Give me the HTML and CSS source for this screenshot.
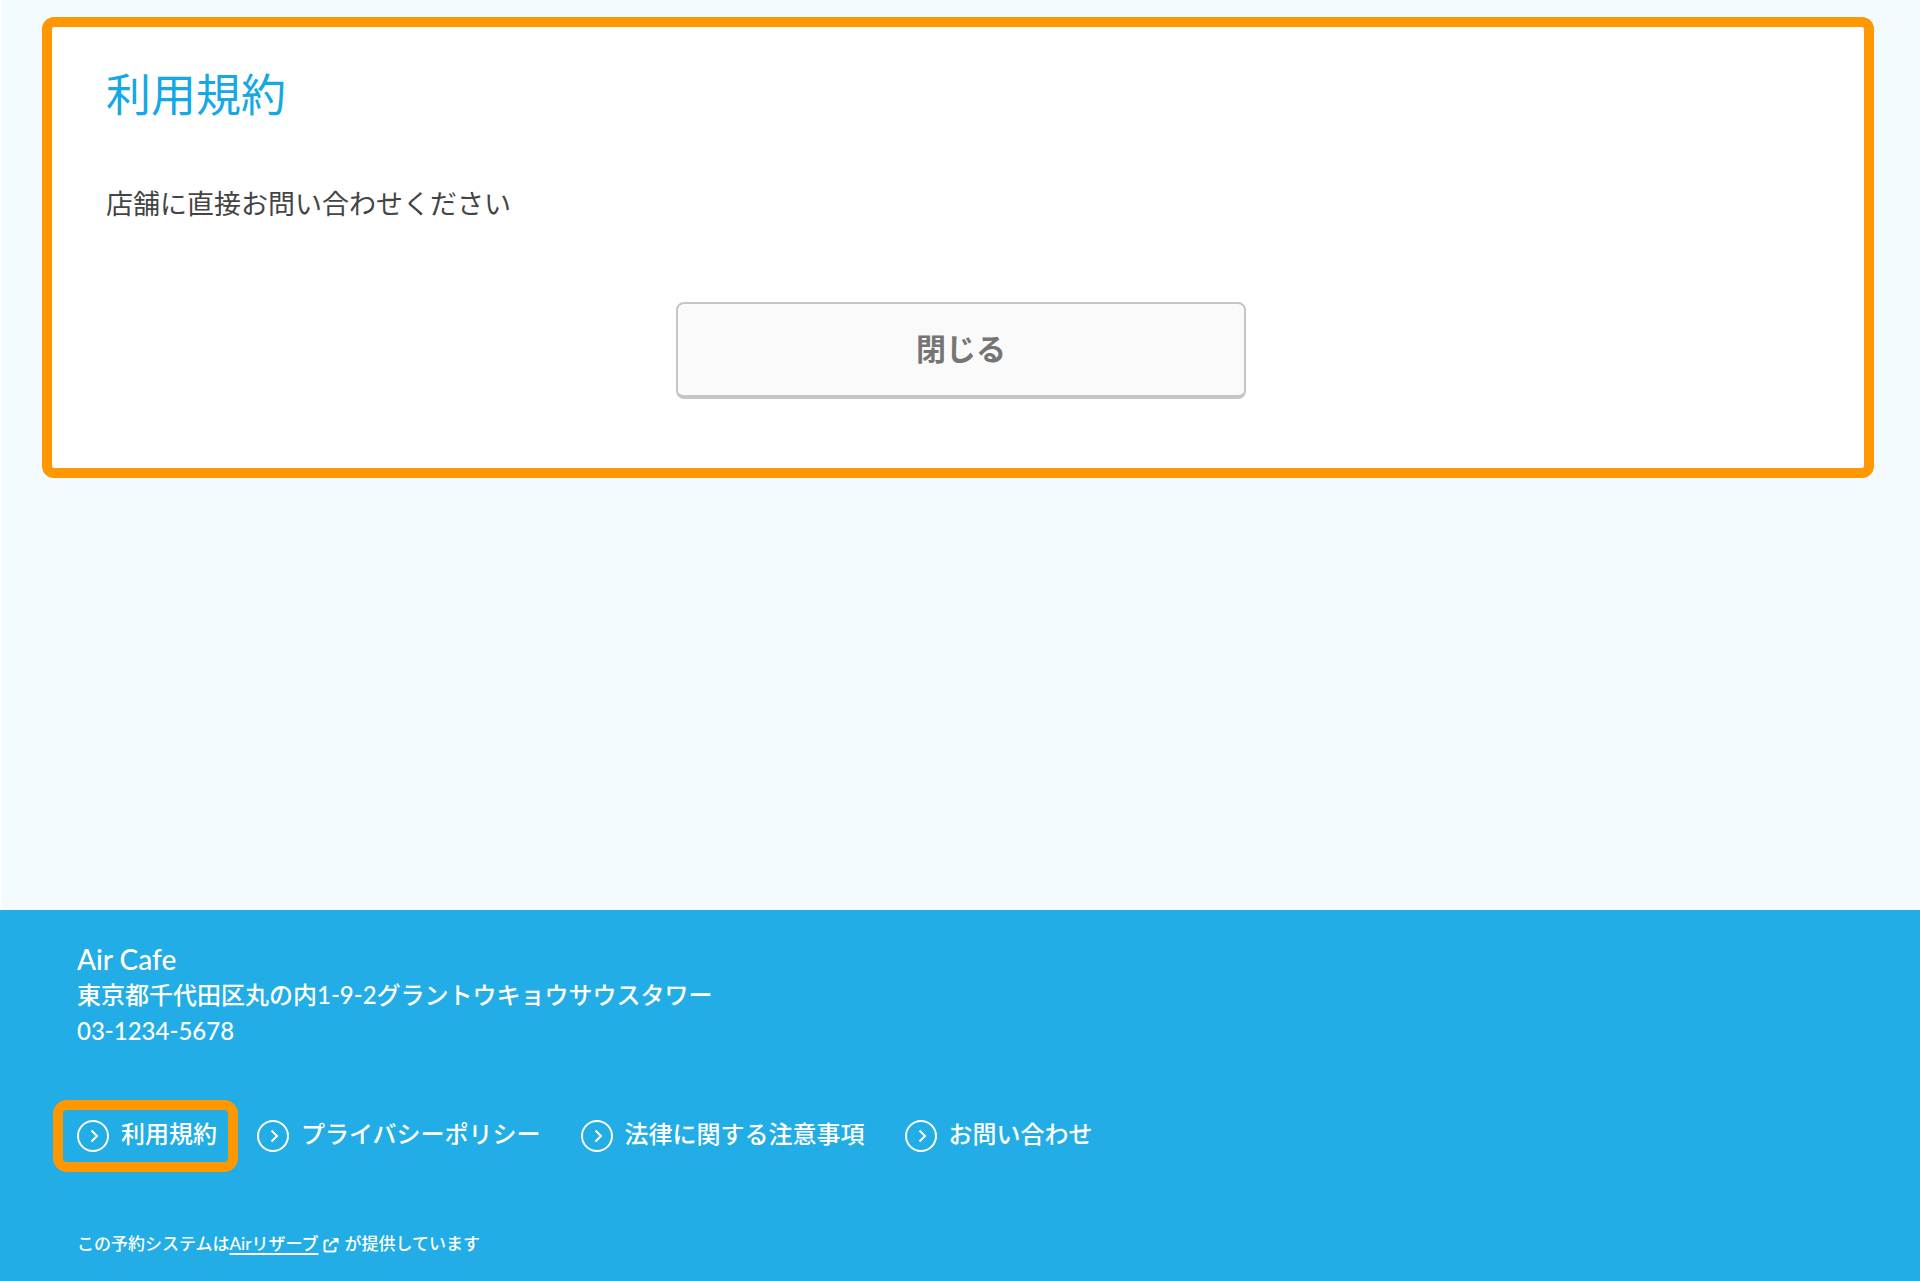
FILE: index.html
```html
<!DOCTYPE html>
<html lang="ja">
<head>
  <meta charset="utf-8">
  <title>利用規約</title>
  <link rel="stylesheet" href="styles.css">
</head>
<body>
  <main class="content">
    <section class="terms">
      <h1 class="terms-title">利用規約</h1>
      <p class="terms-text">店舗に直接お問い合わせください</p>
      <button type="button" class="close-button">閉じる</button>
    </section>
  </main>

  <footer class="footer">
    <address class="shop">
      <p class="shop-name">Air Cafe</p>
      <p>東京都千代田区丸の内1-9-2グラントウキョウサウスタワー</p>
      <p>03-1234-5678</p>
    </address>

    <nav class="footer-nav">
      <a href="#" class="footer-link active">
        <svg class="arrow-icon" viewBox="0 0 32 32"><circle cx="16" cy="16" r="15"/><path d="M14.5 10.5l5.5 5.5-5.5 5.5"/></svg>
        <span>利用規約</span>
      </a>
      <a href="#" class="footer-link">
        <svg class="arrow-icon" viewBox="0 0 32 32"><circle cx="16" cy="16" r="15"/><path d="M14.5 10.5l5.5 5.5-5.5 5.5"/></svg>
        <span>プライバシーポリシー</span>
      </a>
      <a href="#" class="footer-link">
        <svg class="arrow-icon" viewBox="0 0 32 32"><circle cx="16" cy="16" r="15"/><path d="M14.5 10.5l5.5 5.5-5.5 5.5"/></svg>
        <span>法律に関する注意事項</span>
      </a>
      <a href="#" class="footer-link">
        <svg class="arrow-icon" viewBox="0 0 32 32"><circle cx="16" cy="16" r="15"/><path d="M14.5 10.5l5.5 5.5-5.5 5.5"/></svg>
        <span>お問い合わせ</span>
      </a>
    </nav>

    <p class="powered">この予約システムは<a href="#">Airリザーブ</a><svg class="external-icon" viewBox="0 0 16 16"><path d="M6 3.5H3Q1.5 3.5 1.5 5v8q0 1.500 1.500 1.500h8q1.500 0 1.500-1.500v-3M6.500 9.500Q7 5 13 4"/><path class="external-head" d="M9.500 1H15.500V7z"/></svg>が提供しています</p>
  </footer>
</body>
</html>
```

FILE: styles.css
```css
* {
  box-sizing: border-box;
}

body {
  margin: 0;
  min-height: 100vh;
  display: flex;
  flex-direction: column;
  font-family: Lato, "Noto Sans CJK JP", sans-serif;
  background-color: #f3fbff;
  color: #444;
}

h1,
p {
  margin: 0;
}

.content {
  flex: 1;
  padding: 17px 46px 48px 40px;
  border-left: 2px solid #fff;
}

.terms {
  display: flex;
  flex-direction: column;
  padding: 40px 48px 69px 54px;
  border: 10px solid #ff9800;
  border-radius: 12px;
  background-color: #fff;
}

.terms-title {
  font-size: 45px;
  font-weight: 400;
  line-height: 56px;
  color: #14a9e4;
}

.terms-text {
  margin-top: 61px;
  font-size: 27px;
  line-height: 40px;
}

.close-button {
  align-self: center;
  width: 100%;
  max-width: 570px;
  margin-top: 78px;
  padding: 21px 0 24px;
  border: 2px solid #c6c6c6;
  border-bottom-width: 4px;
  border-radius: 8px;
  background-color: #fafafa;
  color: #757575;
  font-family: inherit;
  font-size: 30px;
  font-weight: 700;
  line-height: 46px;
  cursor: pointer;
}

.footer {
  padding: 31px 77px 23px;
  background-color: #22ade6;
  color: #fff;
  font-weight: 500;
}

.shop {
  font-size: 24px;
  font-style: normal;
  line-height: 36px;
}

.shop-name {
  font-size: 28px;
}

.footer-nav {
  display: flex;
  flex-wrap: wrap;
  gap: 40px;
  margin-top: 71px;
}

.footer-link {
  position: relative;
  display: flex;
  align-items: center;
  gap: 12px;
  height: 32px;
  color: #fff;
  font-size: 24px;
  line-height: 32px;
  text-decoration: none;
}

.footer-link span {
  padding-bottom: 4px;
}

.footer-link.active::after {
  content: "";
  position: absolute;
  inset: -20px -21px -20px -24px;
  border: 10px solid #ff9800;
  border-radius: 14px;
}

.arrow-icon {
  width: 32px;
  height: 32px;
  fill: none;
  stroke: #fff;
  stroke-width: 2;
}

.powered {
  margin-top: 78px;
  font-size: 17px;
  line-height: 28px;
}

.powered a {
  color: #fff;
  text-decoration-thickness: 2px;
  text-underline-offset: 3px;
}

.external-icon {
  width: 16px;
  height: 16px;
  margin: 0 5px;
  vertical-align: -3px;
  fill: none;
  stroke: #fff;
  stroke-width: 2;
}

.external-head {
  fill: #fff;
  stroke: none;
}
```
